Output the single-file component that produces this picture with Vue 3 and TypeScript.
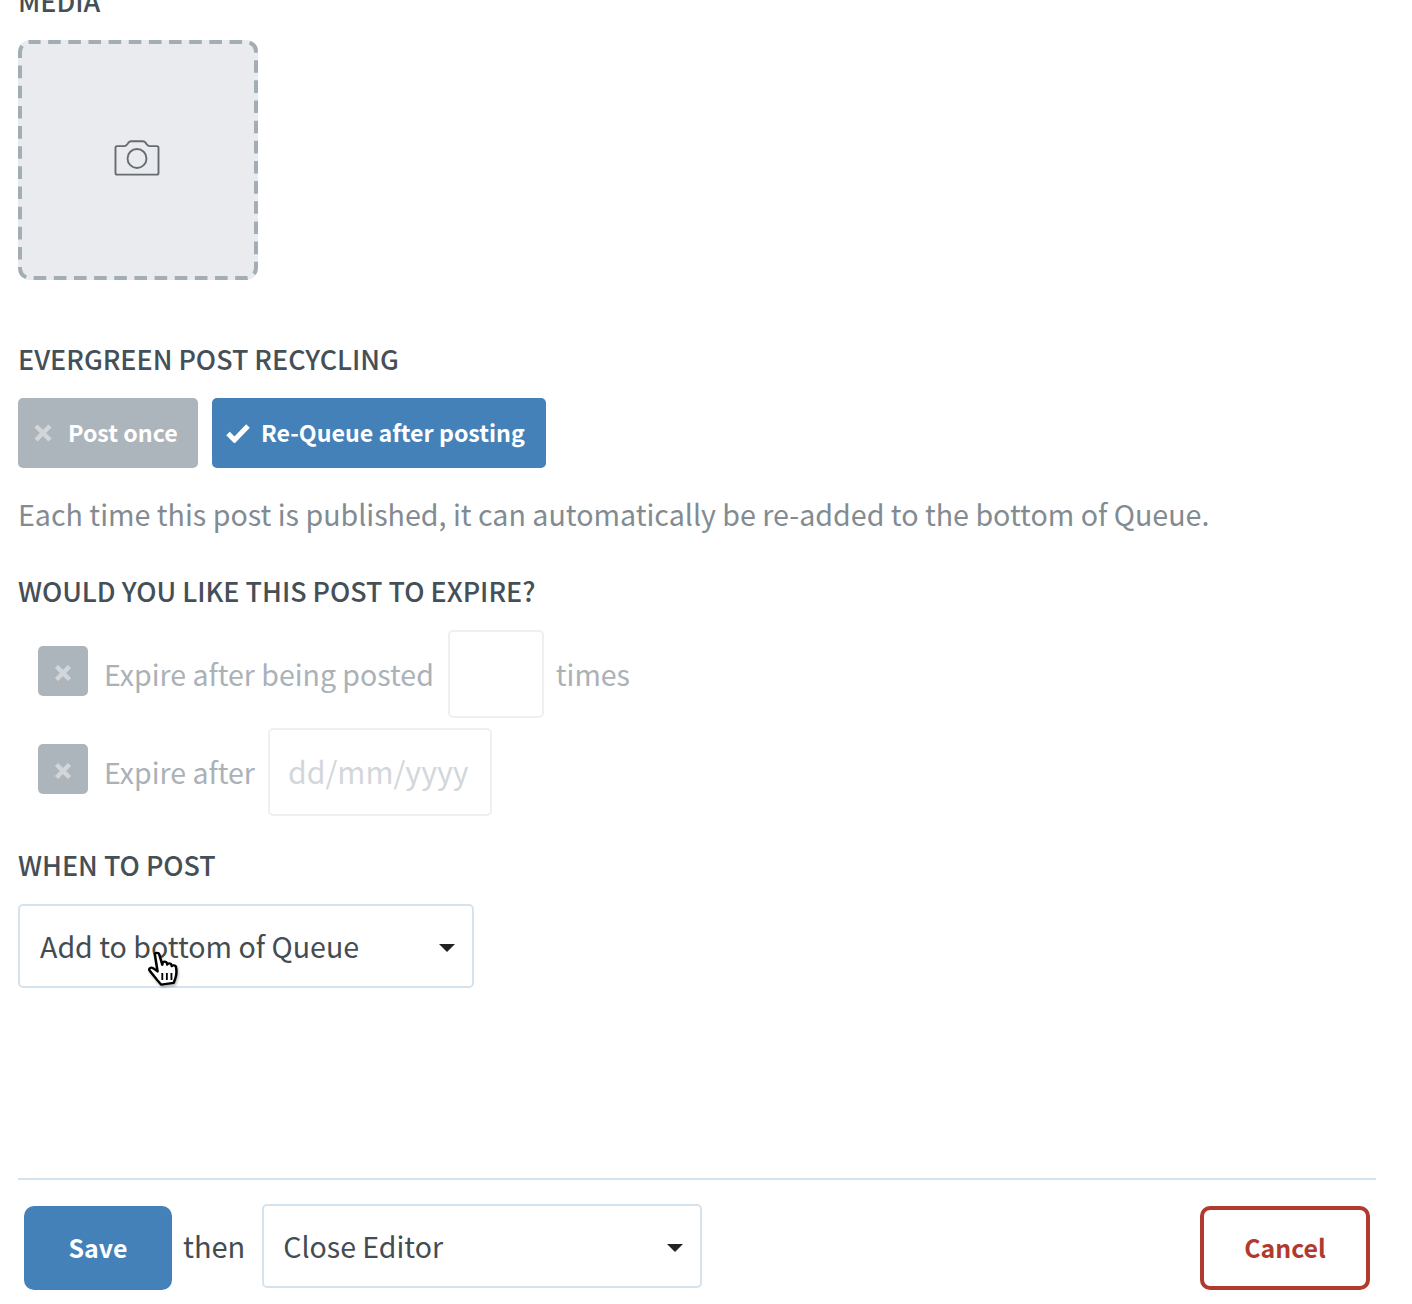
<script setup lang="ts">
import { ref } from 'vue'

const whenToPost = ref('Add to bottom of Queue')
const afterSave = ref('Close Editor')
</script>

<template>
  <div class="editor">
    <h3 class="label label-media">MEDIA</h3>
    <div class="media-drop">
      <svg class="media-border" width="240" height="240" viewBox="0 0 240 240" fill="none">
        <rect x="2" y="2" width="236" height="236" rx="10" stroke="#a3adb6" stroke-width="4" stroke-dasharray="12.600 7.550" stroke-dashoffset="2" />
      </svg>
      <svg class="camera" width="46" height="36" viewBox="0 0 48 38" fill="none" stroke="#666c71" stroke-width="2">
        <path d="M3 6.500h7.500c1.500 0 2.500-.8 3.300-2L15 2.800c.7-1 1.500-1.500 2.800-1.500h12.400c1.300 0 2.100.5 2.800 1.500l1.200 1.700c.8 1.200 1.800 2 3.300 2H45c1 0 1.700.7 1.700 1.700v26.600c0 1-.7 1.700-1.700 1.700H3c-1 0-1.700-.7-1.700-1.700V8.200c0-1 .7-1.700 1.700-1.700z" />
        <circle cx="24" cy="19.500" r="10" />
      </svg>
    </div>

    <h3 class="label label-evergreen">EVERGREEN POST RECYCLING</h3>
    <div class="choice-row">
      <button class="choice choice-off" type="button">
        <svg width="18" height="18" viewBox="0 0 18 18" stroke="#d3d6d9" stroke-width="4.500">
          <path d="M2 2l14 14M16 2L2 16" />
        </svg>
        Post once
      </button>
      <button class="choice choice-on" type="button">
        <svg width="24" height="20" viewBox="0 0 24 20" fill="none" stroke="#fff" stroke-width="5">
          <path d="M2 10.500l6.500 6.500L22 3" />
        </svg>
        Re-Queue after posting
      </button>
    </div>
    <p class="hint">Each time this post is published, it can automatically be re-added to the bottom of Queue.</p>

    <h3 class="label label-expire">WOULD YOU LIKE THIS POST TO EXPIRE?</h3>
    <div class="expire-row">
      <span class="tick">
        <svg width="18" height="18" viewBox="0 0 18 18" stroke="#d3d6d9" stroke-width="4.500">
          <path d="M2.500 2.500l13 13M15.500 2.500l-13 13" />
        </svg>
      </span>
      <span class="expire-text">Expire after being posted</span>
      <input class="faded-input times-input" type="text" disabled />
      <span class="expire-text">times</span>
    </div>
    <div class="expire-row expire-row-date">
      <span class="tick">
        <svg width="18" height="18" viewBox="0 0 18 18" stroke="#d3d6d9" stroke-width="4.500">
          <path d="M2.500 2.500l13 13M15.500 2.500l-13 13" />
        </svg>
      </span>
      <span class="expire-text">Expire after</span>
      <input class="faded-input date-input" type="text" placeholder="dd/mm/yyyy" disabled />
    </div>

    <h3 class="label label-when">WHEN TO POST</h3>
    <div class="select-wrap when-select">
      <select v-model="whenToPost">
        <option>Add to bottom of Queue</option>
        <option>Add to top of Queue</option>
      </select>
      <span class="caret"></span>
      <svg class="hand" width="32" height="36" viewBox="1 0 28 36" preserveAspectRatio="none">
        <path d="M7 3.500c0-2 3.300-2.300 3.800-.2l2.700 10.500.3-2c.4-1.800 3.400-1.600 3.700.3l.4 1.500c.4-1.700 3.300-1.500 3.700.4l.3 1.200c.6-1.500 3.300-1.100 3.600.8.600 3.700.4 8.500-.6 11.500l-1.400 4.300-11 1.800-3.200-4.300L2.700 20c-1.600-2 .5-4.200 2.700-2.800l4 3.300z" fill="#fff" stroke="#000" stroke-width="2.200" stroke-linejoin="round" />
        <path d="M13.500 22v7M17.500 22v7M21.500 22v7" stroke="#000" stroke-width="1.600" />
      </svg>
    </div>

    <div class="footer">
      <button class="save" type="button">Save</button>
      <span class="then">then</span>
      <div class="select-wrap then-select">
        <select v-model="afterSave">
          <option>Close Editor</option>
          <option>Add Another Post</option>
        </select>
        <span class="caret"></span>
      </div>
      <button class="cancel" type="button">Cancel</button>
    </div>
  </div>
</template>

<style>
html, body {
  margin: 0;
  height: 1304px;
  overflow: hidden;
  background: #fff;
}
</style>

<style scoped>
.editor {
  box-sizing: border-box;
  width: 1412px;
  height: 1304px;
  padding: 0 36px 0 18px;
  overflow: hidden;
  font-family: "Noto Sans CJK SC", "Source Sans Pro", "Liberation Sans", sans-serif;
  color: #444c52;
}

.label {
  margin: 0;
  font-size: 26.900px;
  line-height: 32px;
  font-weight: 500;
  color: #454f57;
}

.label-media {
  margin-top: -15px;
}

.media-drop {
  position: relative;
  box-sizing: border-box;
  width: 240px;
  height: 240px;
  margin-top: 23px;
  display: flex;
  align-items: center;
  justify-content: center;
  border-radius: 12px;
  background: #e9ebee;
}

.media-border {
  position: absolute;
  left: 0;
  top: 0;
}

.camera {
  margin: -4px 2px 0 0;
}

.label-evergreen {
  margin-top: 63px;
}

.choice-row {
  display: flex;
  gap: 14px;
  margin-top: 23px;
}

.choice {
  display: flex;
  align-items: center;
  height: 70px;
  border: 0;
  border-radius: 5px;
  padding: 0 0 2px;
  font-family: inherit;
  font-size: 23.200px;
  font-weight: 700;
  color: #fff;
  white-space: nowrap;
}

.choice-off {
  width: 180px;
  gap: 16px;
  padding-left: 16px;
  background: #adb5bc;
}

.choice-off svg,
.choice-on svg {
  margin-top: 2px;
}

.choice-on {
  width: 334px;
  gap: 11px;
  padding-left: 14px;
  background: #4381b8;
}

.hint {
  margin: 25px 0 0;
  font-size: 28.630px;
  line-height: 42px;
  color: #838b92;
}

.label-expire {
  margin-top: 40px;
}

.expire-row {
  display: flex;
  align-items: center;
  margin-top: 23px;
  padding-left: 20px;
  color: #aab1b7;
  font-size: 28.500px;
}

.expire-row-date {
  margin-top: 10px;
}

.tick {
  width: 50px;
  height: 50px;
  margin-top: -6px;
  margin-right: 16px;
  display: flex;
  align-items: center;
  justify-content: center;
  border-radius: 5px;
  background: #adb5bc;
}

.tick svg {
  margin-top: 4px;
}

.expire-text {
  line-height: 42px;
}

.faded-input {
  box-sizing: border-box;
  height: 88px;
  padding: 0 0 2px 18px;
  border: 2px solid #edf0f3;
  border-radius: 5px;
  background: #fff;
  font-family: inherit;
  font-size: 30.300px;
}

.faded-input::placeholder {
  color: #d3d7db;
  opacity: 1;
}

.times-input {
  width: 96px;
  margin: 0 12px 0 14px;
}

.date-input {
  width: 224px;
  margin-left: 13px;
}

.label-when {
  margin-top: 33px;
}

.select-wrap {
  position: relative;
  box-sizing: border-box;
  height: 84px;
}

.select-wrap select {
  width: 100%;
  height: 100%;
  box-sizing: border-box;
  padding: 0 20px 2px;
  border: 2px solid #d5e3ef;
  border-radius: 5px;
  background: #fff;
  appearance: none;
  font-family: inherit;
  font-size: 28.500px;
  color: #444c52;
}

.when-select {
  width: 456px;
  margin-top: 23px;
}

.when-select select {
  font-size: 28.600px;
}

.caret {
  position: absolute;
  right: 19px;
  top: 40px;
  border-left: 8px solid transparent;
  border-right: 8px solid transparent;
  border-top: 8px solid #222;
}

.hand {
  position: absolute;
  left: 130px;
  top: 47px;
  filter: drop-shadow(1px 2px 1px rgba(0, 0, 0, 0.25));
}

.footer {
  display: flex;
  align-items: center;
  height: 136px;
  margin-top: 190px;
  padding: 0 6px;
  border-top: 2px solid #d5e3ef;
}

.save {
  width: 148px;
  height: 84px;
  border: 0;
  border-radius: 10px;
  padding: 0 0 2px;
  background: #4381b8;
  font-family: inherit;
  font-size: 24.900px;
  font-weight: 700;
  color: #fff;
}

.then {
  margin: 0 17px 6px 11px;
  font-size: 29px;
  color: #444c52;
}

.then-select {
  width: 440px;
  margin-bottom: 4px;
}

.then-select select {
  padding-left: 19px;
}

.cancel {
  box-sizing: border-box;
  width: 170px;
  height: 84px;
  margin-left: auto;
  border: 4px solid #b03a2e;
  border-radius: 10px;
  padding: 0 0 2px;
  background: #fff;
  font-family: inherit;
  font-size: 24.900px;
  font-weight: 700;
  color: #b03a2e;
}
</style>
